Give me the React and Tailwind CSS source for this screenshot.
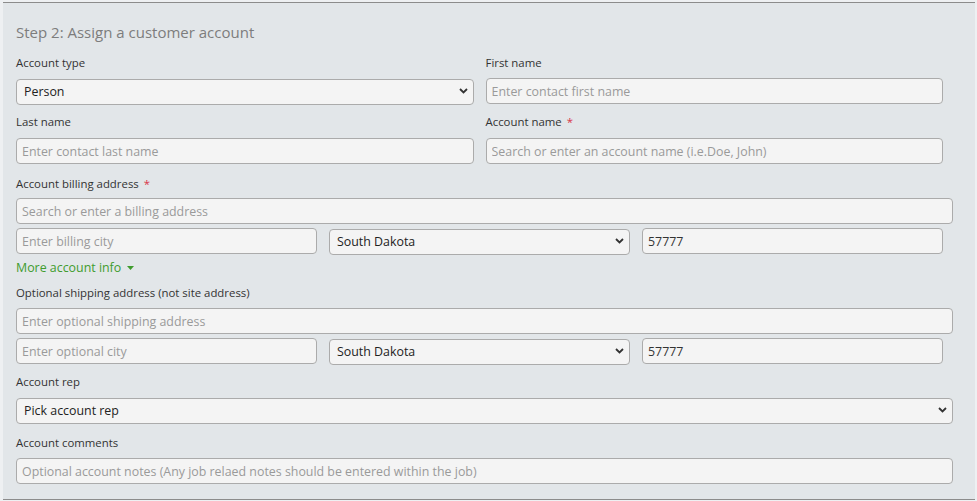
import React from 'react'

const font = { fontFamily: '"Open Sans", "DejaVu Sans", sans-serif' }

function Label({ children, required, className = '' }) {
  return (
    <div className={'h-4 leading-4 text-[11.4px] text-[#333] ' + className}>
      {children}
      {required && <span className="ml-[5px] text-[#d9354a]">*</span>}
    </div>
  )
}

function TextInput({ placeholder, value, className = '' }) {
  return (
    <input
      className={
        'h-[26px] rounded-[4px] border border-[#ababab] bg-[#f4f4f4] px-[5px] text-[12.4px] text-[#333] placeholder:text-[#9a9a9a] outline-none ' +
        className
      }
      placeholder={placeholder}
      defaultValue={value}
      style={font}
    />
  )
}

function Select({ value, className = '' }) {
  return (
    <div className={'relative h-[26px] ' + className}>
      <select
        className="h-full w-full appearance-none rounded-[4px] border border-[#ababab] bg-[#f4f4f4] pl-[7px] text-[12.4px] text-[#222] outline-none"
        defaultValue={value}
        style={font}
      >
        <option>{value}</option>
      </select>
      <svg
        className="pointer-events-none absolute right-[6px] top-[10px]"
        width="9"
        height="6"
        viewBox="0 0 9 6"
      >
        <path d="M1 1l3.5 3.5L8 1" fill="none" stroke="#333" strokeWidth="1.8" />
      </svg>
    </div>
  )
}

export default function App() {
  return (
    <div className="h-[501px] w-[977px] bg-[#eef0f2] pl-[3px] pt-[2px]" style={font}>
      <div className="h-[498px] w-[972px] border-y border-[#8c8c8c] bg-[#e2e6e9] pl-[13px]">
        <div className="mt-[19px] h-5 leading-5 text-[15px] text-[#7d7d7d]">
          Step 2: Assign a customer account
        </div>

        <div className="mt-[13px] grid w-[927px] grid-cols-2 gap-x-3">
          <div>
            <Label>Account type</Label>
            <Select value="Person" className="mt-[7px]" />
          </div>
          <div>
            <Label>First name</Label>
            <TextInput placeholder="Enter contact first name" className="mt-[7px] w-full" />
          </div>
          <div className="mt-[10px]">
            <Label>Last name</Label>
            <TextInput placeholder="Enter contact last name" className="mt-[8px] w-full" />
          </div>
          <div className="mt-[10px]">
            <Label required>Account name</Label>
            <TextInput
              placeholder="Search or enter an account name (i.e.Doe, John)"
              className="mt-[8px] w-full"
            />
          </div>
        </div>

        <Label required className="mt-[12px]">Account billing address</Label>
        <TextInput placeholder="Search or enter a billing address" className="mt-[6px] w-[937px]" />
        <div className="mt-[4px] grid w-[927px] grid-cols-3 gap-x-3">
          <TextInput placeholder="Enter billing city" className="w-full" />
          <Select value="South Dakota" />
          <TextInput value="57777" className="w-full" />
        </div>

        <div className="mt-[6px] flex h-4 items-center text-[12.4px] leading-4 text-[#3f9c2e]">
          More account info
          <svg className="ml-[6px]" width="7" height="4" viewBox="0 0 7 4">
            <path d="M0 0h7L3.5 4z" fill="#3f9c2e" />
          </svg>
        </div>

        <Label className="mt-[9px]">Optional shipping address (not site address)</Label>
        <TextInput placeholder="Enter optional shipping address" className="mt-[7px] w-[937px]" />
        <div className="mt-[4px] grid w-[927px] grid-cols-3 gap-x-3">
          <TextInput placeholder="Enter optional city" className="w-full" />
          <Select value="South Dakota" />
          <TextInput value="57777" className="w-full" />
        </div>

        <Label className="mt-[10px]">Account rep</Label>
        <Select value="Pick account rep" className="mt-[7px] w-[937px]" />

        <Label className="mt-[12px]">Account comments</Label>
        <TextInput
          placeholder="Optional account notes (Any job relaed notes should be entered within the job)"
          className="mt-[7px] w-[937px]"
        />
      </div>
    </div>
  )
}
